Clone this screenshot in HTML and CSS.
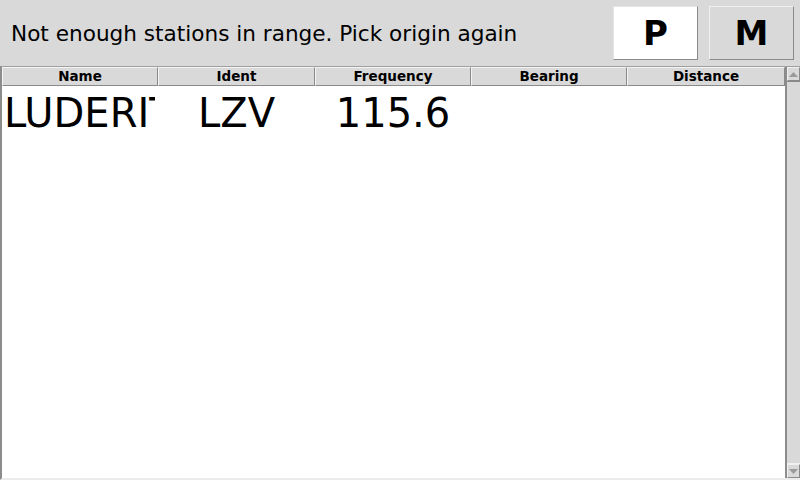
FILE: index.html
```html
<!DOCTYPE html>
<html>
<head>
<meta charset="utf-8">
<link rel="stylesheet" href="styles.css">
</head>
<body>
<div class="app">
  <div class="topbar">
    <div class="msg">Not enough stations in range. Pick origin again</div>
    <div class="btns">
      <div class="btn btn-on">P</div>
      <div class="btn">M</div>
    </div>
  </div>
  <div class="tableframe">
    <div class="table">
      <div class="head">
        <div class="hcell">Name</div>
        <div class="hcell">Ident</div>
        <div class="hcell">Frequency</div>
        <div class="hcell">Bearing</div>
        <div class="hcell">Distance</div>
      </div>
      <div class="row">
        <div class="cell left">LUDERITZ</div>
        <div class="cell">LZV</div>
        <div class="cell">115.6</div>
        <div class="cell"></div>
        <div class="cell"></div>
      </div>
    </div>
    <div class="scroll">
      <div class="arrow"><svg width="9" height="5" viewBox="0 0 9 5"><polygon points="0,5 9,5 4.5,0" fill="#9a9a9a"/></svg></div>
      <div class="track"></div>
      <div class="arrow"><svg width="9" height="5" viewBox="0 0 9 5"><polygon points="0,0 9,0 4.5,5" fill="#9a9a9a"/></svg></div>
    </div>
  </div>
</div>
</body>
</html>
```

FILE: styles.css
```css
* { box-sizing: border-box; }
html, body { margin: 0; padding: 0; }
body {
  width: 800px;
  height: 480px;
  overflow: hidden;
  background: #d9d9d9;
  font-family: "DejaVu Sans", sans-serif;
  color: #000;
}
.app {
  display: flex;
  flex-direction: column;
  width: 800px;
  height: 480px;
}
.topbar {
  height: 66px;
  display: flex;
  align-items: center;
  justify-content: space-between;
  padding: 0 6px 0 11px;
}
.msg {
  font-size: 21.6px;
  margin-top: 1px;
}
.btns {
  display: flex;
  gap: 11px;
  align-self: flex-start;
  margin-top: 6px;
}
.btn {
  width: 85px;
  height: 54px;
  display: flex;
  align-items: center;
  justify-content: center;
  font-weight: bold;
  font-size: 34px;
  background: #d9d9d9;
  border-top: 1px solid #f0f0f0;
  border-left: 1px solid #f0f0f0;
  border-right: 1px solid #8a8a8a;
  border-bottom: 1px solid #8a8a8a;
}
.btn-on { background: #fff; border-top-color: #e4e4e4; border-left-color: #e4e4e4; }
.tableframe {
  flex: 1;
  display: flex;
  border-top: 1px solid #a0a0a0;
  border-left: 2px solid #8c8c8c;
  border-bottom: 2px solid #ececec;
  background: #fff;
  min-height: 0;
}
.table {
  flex: 1;
  display: flex;
  flex-direction: column;
  background: #fff;
}
.head, .row {
  display: grid;
  grid-template-columns: 156px 157px 156px 156px 158px;
}
.hcell {
  height: 19px;
  background: #d9d9d9;
  border-top: 1px solid #f4f4f4;
  border-left: 1px solid #f4f4f4;
  border-right: 1px solid #8a8a8a;
  border-bottom: 1px solid #8a8a8a;
  font-weight: bold;
  font-size: 13.5px;
  display: flex;
  align-items: center;
  justify-content: center;
  line-height: 1;
}
.row { height: 54px; }
.cell {
  font-size: 40px;
  display: flex;
  align-items: center;
  justify-content: center;
  overflow: hidden;
  white-space: nowrap;
}
.cell.left {
  justify-content: flex-start;
  padding-left: 2px;
  clip-path: inset(0 3px 0 0);
}
.scroll {
  width: 16px;
  display: flex;
  flex-direction: column;
  background: #d9d9d9;
  border-left: 2px solid #8c8c8c;
}
.arrow {
  height: 14px;
  display: flex;
  align-items: center;
  justify-content: center;
  border-top: 1px solid #f0f0f0;
  border-left: 1px solid #f0f0f0;
  border-right: 1px solid #8a8a8a;
  border-bottom: 1px solid #8a8a8a;
}
.track {
  flex: 1;
  border-top: 1px solid #8a8a8a;
  border-bottom: 1px solid #f0f0f0;
}
```
